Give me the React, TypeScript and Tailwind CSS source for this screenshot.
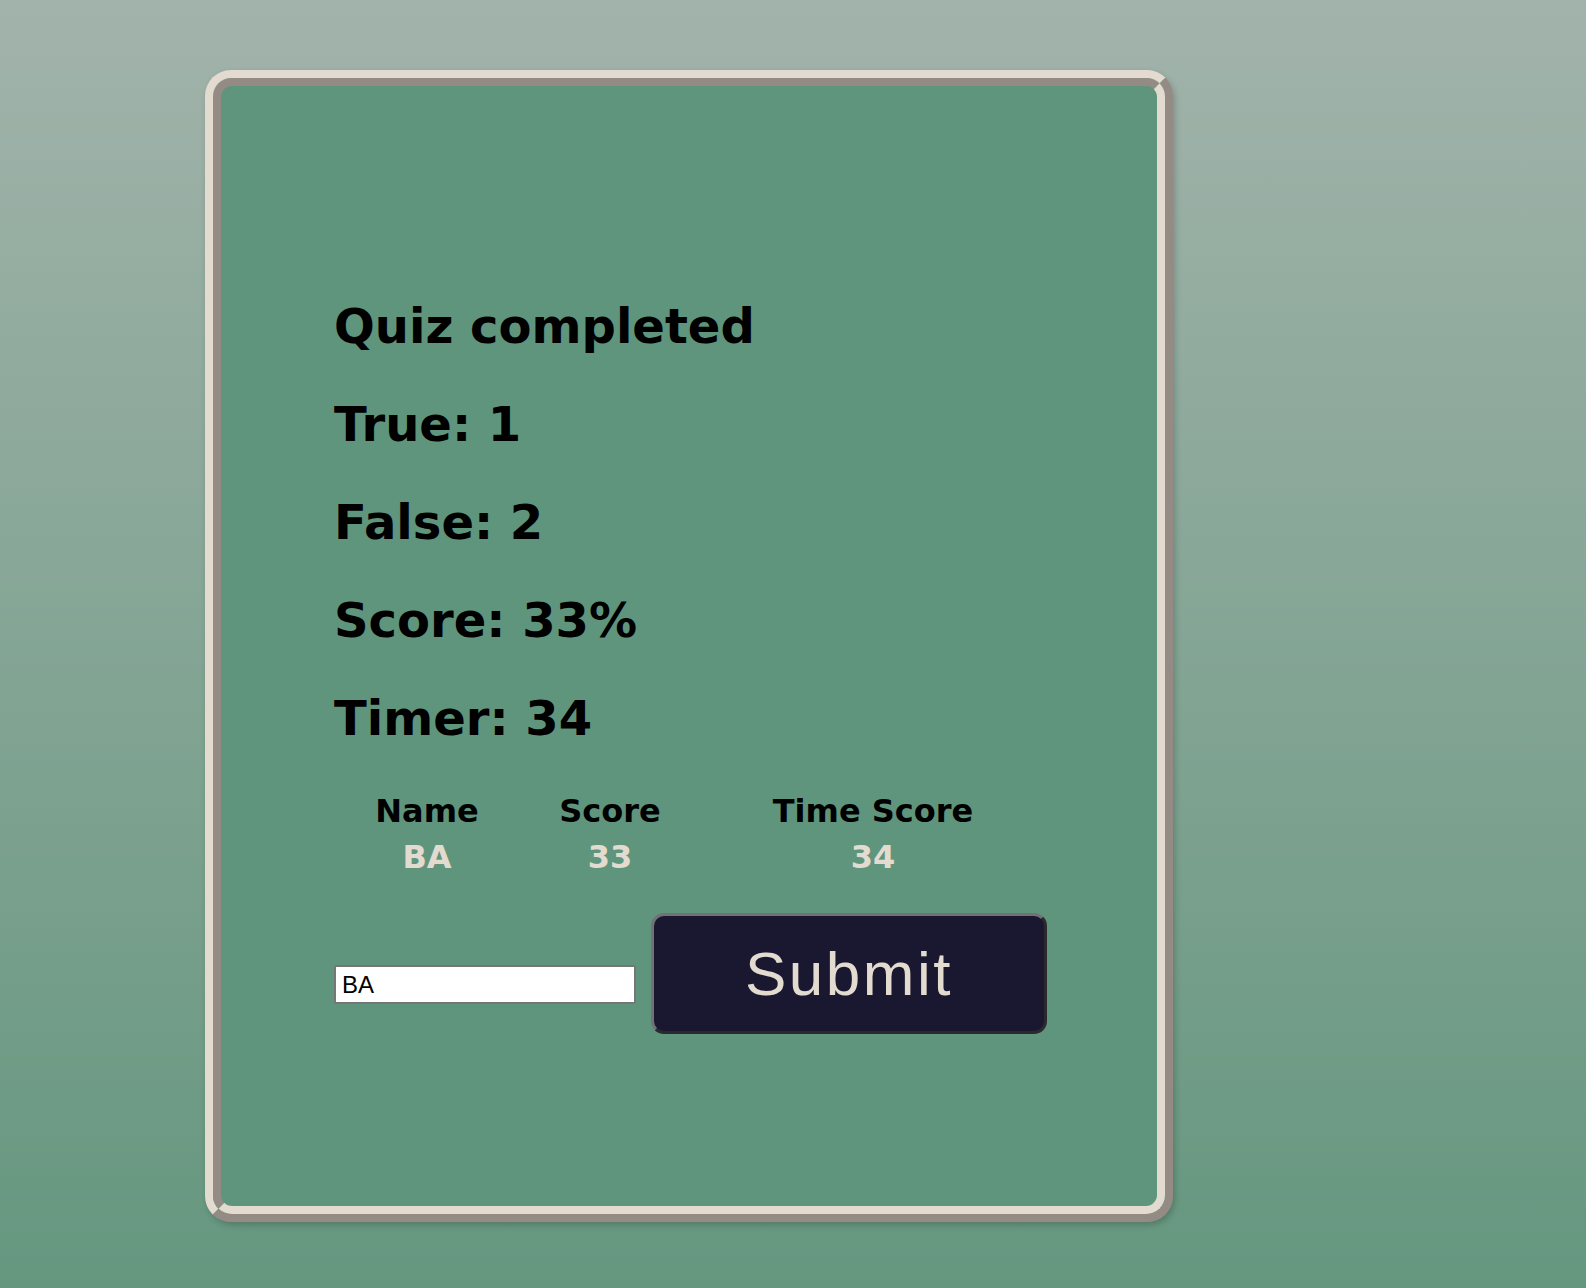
import React, { useState } from 'react';

const results = [
    { label: 'True', value: '1' },
    { label: 'False', value: '2' },
    { label: 'Score', value: '33%' },
    { label: 'Timer', value: '34' },
];

const App: React.FC = () => {
    const [initials, setInitials] = useState('BA');

    return (
        <div className="min-h-screen w-full bg-gradient-to-b from-[#a2b3ab] to-[#65977f] pl-[205px] pt-[70px] pb-[66px] font-['DejaVu_Sans',Verdana,sans-serif]">
            {/* Outer ridge */}
            <div className="w-[968px] h-[1152px] rounded-[26px] border-8 border-t-[#e3dbcf] border-l-[#e3dbcf] border-b-[#948b85] border-r-[#948b85] shadow-[2px_3px_6px_rgba(0,0,0,0.2)]">
                <div className="h-full w-full rounded-[19px] border-8 border-t-[#948b85] border-l-[#948b85] border-b-[#e3dbcf] border-r-[#e3dbcf] bg-[#5f957d] pl-[113px] pt-[212px]">
                    <div className="flex flex-col gap-[42px]">
                        <h1 className="text-[48px] leading-[56px] font-bold text-black">Quiz completed</h1>
                        {results.map(r => (
                            <p key={r.label} className="text-[48px] leading-[56px] font-bold text-black">
                                {r.label}: {r.value}
                            </p>
                        ))}
                    </div>

                    {/* Highscore table */}
                    <div className="mt-[42px] grid grid-cols-[186px_180px_346px] text-[32px] leading-[46px] font-bold text-center">
                        <div className="text-black">Name</div>
                        <div className="text-black">Score</div>
                        <div className="text-black">Time Score</div>
                        <div className="text-[#e3dbcf]">BA</div>
                        <div className="text-[#e3dbcf]">33</div>
                        <div className="text-[#e3dbcf]">34</div>
                    </div>

                    <div className="mt-[33px] flex items-end gap-[15px]">
                        <input
                            type="text"
                            value={initials}
                            onChange={e => setInitials(e.target.value)}
                            className="mb-[30px] h-[39px] w-[302px] rounded-[2px] border-2 border-[#767676] bg-white px-[6px] text-[24px] text-black font-['Liberation_Sans',Arial,sans-serif] outline-none"
                        />
                        <button className="h-[121px] w-[396px] rounded-[13px] border-[3px] border-t-[#727276] border-l-[#727276] border-b-[#2a2a2e] border-r-[#2a2a2e] bg-[#1a1830] text-[62px] tracking-[2.5px] text-[#e3dbcf] font-['Liberation_Sans',Arial,sans-serif]">
                            Submit
                        </button>
                    </div>
                </div>
            </div>
        </div>
    );
};

export default App;
